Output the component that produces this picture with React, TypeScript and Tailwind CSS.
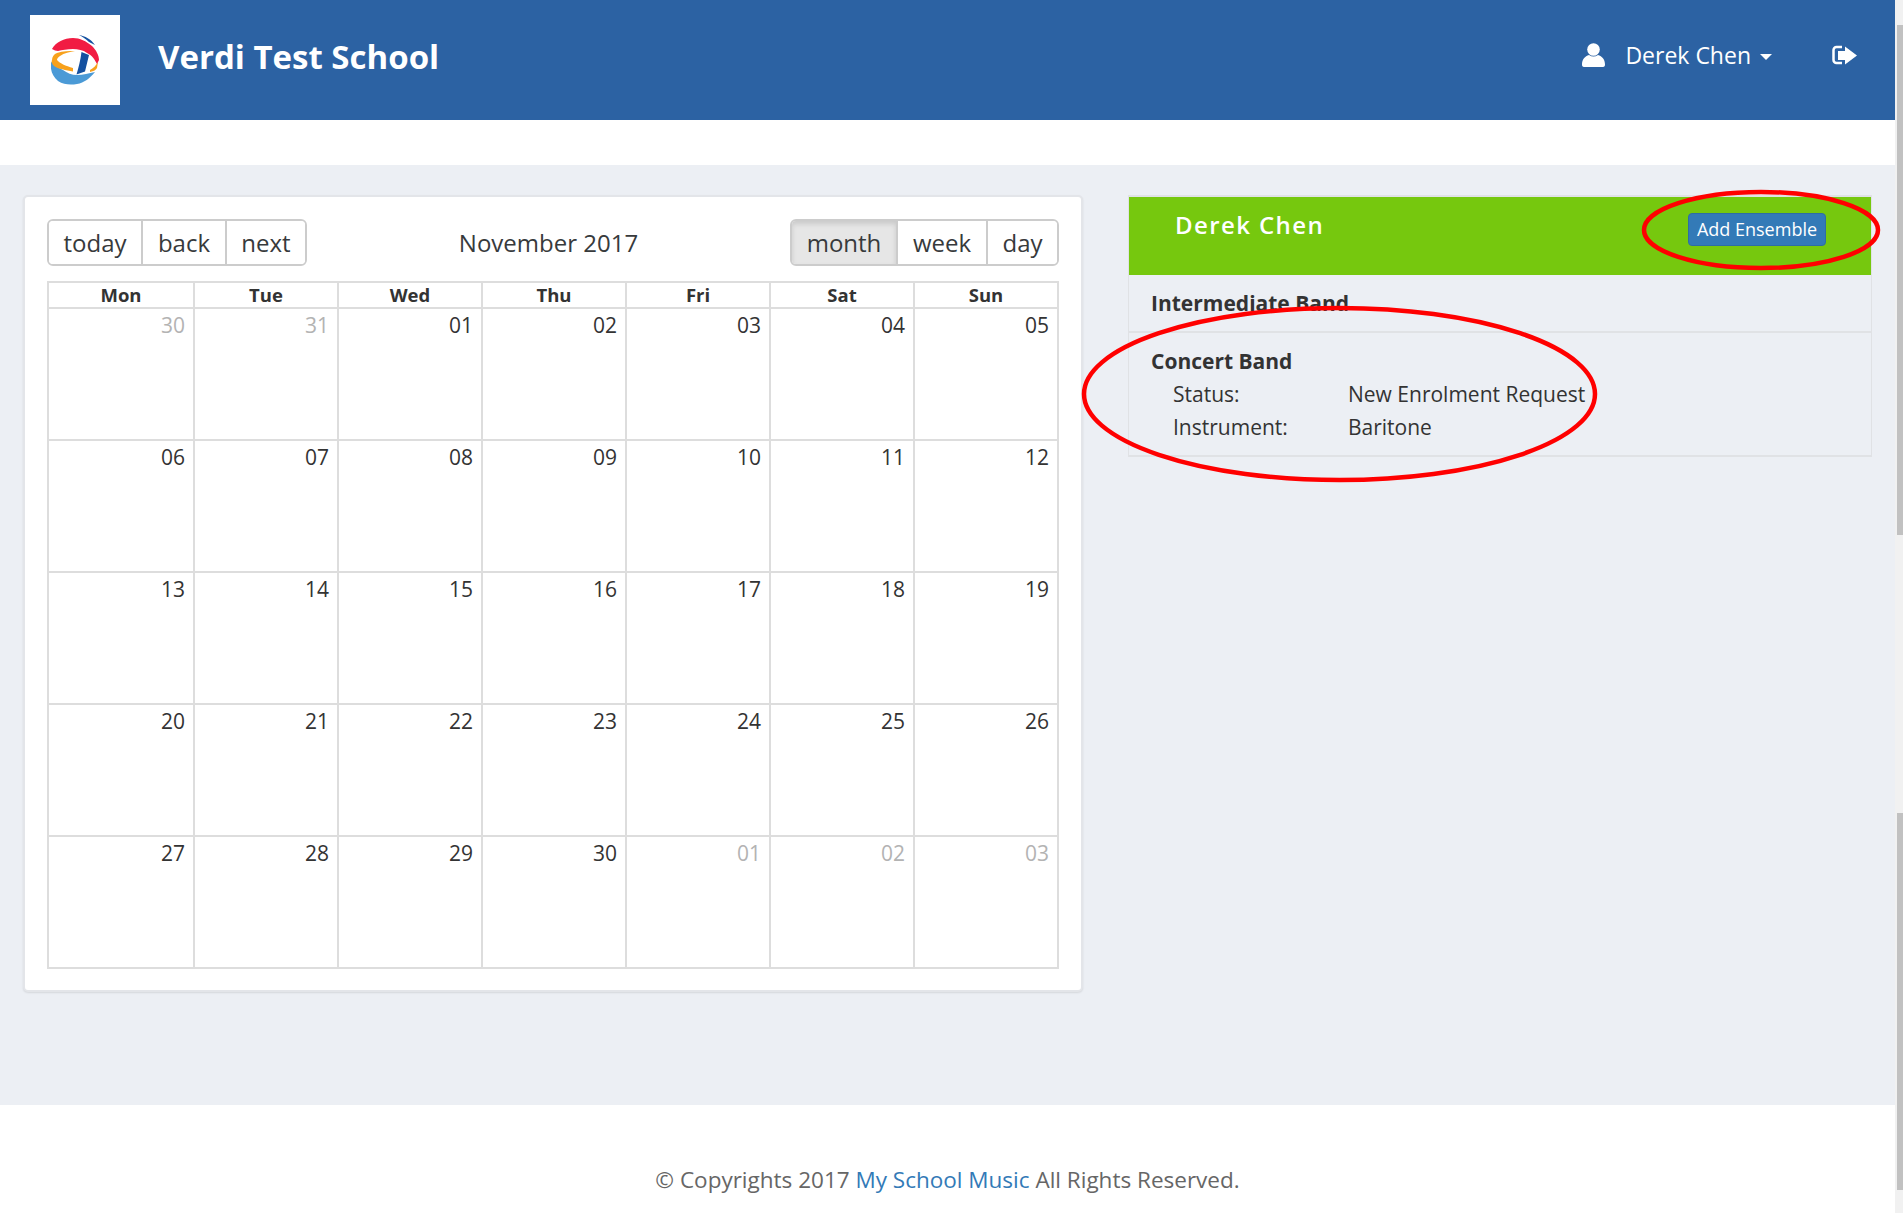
const font = { fontFamily: '"Open Sans", sans-serif' }

const headers = ['Mon', 'Tue', 'Wed', 'Thu', 'Fri', 'Sat', 'Sun']

const weeks = [
  ['30', '31', '01', '02', '03', '04', '05'],
  ['06', '07', '08', '09', '10', '11', '12'],
  ['13', '14', '15', '16', '17', '18', '19'],
  ['20', '21', '22', '23', '24', '25', '26'],
  ['27', '28', '29', '30', '01', '02', '03'],
]

function isOffRange(week: number, day: number) {
  return (week === 0 && day < 2) || (week === 4 && day > 3)
}

function Logo() {
  return (
    <svg width="49" height="50" viewBox="0 0 49 50">
      <path d="M0 27C-1 34 1 41 7 46c6 4 13 4 19 3 7-1 13-6 18-12-6 1-12 3-18 3-5 0-10-2-14-5C8 33 4 31 2 28Z" fill="#4b9ad6" />
      <path d="M1 25c0-3 2-6 5-7 6-2 12-2 18-2-5 1-11 2-15 5-2 1-3 3-3 4 2 3 9 6 16 8v3.500C15 35 7 34 3 31 1 29 0 27 1 25Z" fill="#f7a11c" />
      <path d="M39 35c4-2 6-5 8-8l-1 6c-1 2-3 3-7 4Z" fill="#f7a11c" />
      <path d="M30.500 17l7.500 3L34 36.500 25.500 39.500c2-7 4-14 5-22.500Z" fill="#1450a0" />
      <path d="M28 0c6 1 12 4 16 10l-6-3c-3-3-6-5-10-7Z" fill="#1450a0" />
      <path d="M1 14C5 7 13 3 22 3c7 0 13 3 19 8 4 4 7 9 7 14l-2 4c-2-4-5-9-10-11-4-3-9-4-14-4-6 0-11 1-15 2-2 0-4-1-6-2Z" fill="#f11c43" />
    </svg>
  )
}

function UserIcon() {
  return (
    <svg width="23" height="24" viewBox="0 0 23 24" fill="#fff">
      <circle cx="11.500" cy="6.500" r="6.300" />
      <path d="M2 24c-1.500 0-2-1-2-2.500 0-5 3-8.500 7-9.500 3 2 6 2 9 0 4 1 7 4.500 7 9.500 0 1.500-.5 2.500-2 2.500Z" />
    </svg>
  )
}

function LogOutIcon() {
  return (
    <svg width="25" height="20" viewBox="0 0 25 20" className="ml-[60px]" fill="#fff">
      <path d="M10 2H4.500A3 3 0 0 0 1.500 5v10a3 3 0 0 0 3 3H10" fill="none" stroke="#fff" strokeWidth="2.500" />
      <path d="M6 6h7V1.500L25 10.500 13 19.500V15H6Z" />
    </svg>
  )
}

function ToolbarButton({ label, active, className }: { label: string; active?: boolean; className: string }) {
  return (
    <div
      className={`flex h-full items-center justify-center border-[#ccc] ${className} ${
        active ? 'bg-[#e6e6e6] shadow-[inset_0_3px_5px_rgba(0,0,0,0.125)]' : 'bg-white'
      }`}
    >
      {label}
    </div>
  )
}

function Calendar() {
  return (
    <div className="h-[797px] w-[1060px] rounded-[5px] border-2 border-[#e3e5e9] bg-white px-[22px] pt-[22px] shadow-[0_1px_2px_rgba(0,0,0,0.1)]">
      <div className="flex h-[47px] items-center justify-between text-[24px] text-[#373a3c]">
        <div className="flex h-full overflow-hidden rounded-[6px] border-2 border-[#ccc]">
          <ToolbarButton label="today" className="w-[92px]" />
          <ToolbarButton label="back" className="w-[84px] border-l-2" />
          <ToolbarButton label="next" className="w-[80px] border-l-2" />
        </div>
        <div className="text-[24px]">November 2017</div>
        <div className="flex h-full overflow-hidden rounded-[6px] border-2 border-[#ccc]">
          <ToolbarButton label="month" active className="w-[106px] border-r-2 border-r-[#ccc]" />
          <ToolbarButton label="week" className="w-[88px]" />
          <ToolbarButton label="day" className="w-[71px] border-l-2" />
        </div>
      </div>
      <div className="mt-[15px] w-[1012px] border-2 border-[#ddd]">
        <div className="grid h-[26px] grid-cols-7 border-b-2 border-[#ddd]">
          {headers.map((h, i) => (
            <div
              key={h}
              className={`text-center text-[18.500px] leading-[24px] font-bold text-[#333] ${i > 0 ? 'border-l-2 border-[#ddd]' : ''}`}
            >
              {h}
            </div>
          ))}
        </div>
        {weeks.map((week, w) => (
          <div key={w} className={`grid grid-cols-7 ${w < 4 ? 'h-[132px] border-b-2 border-[#ddd]' : 'h-[130px]'}`}>
            {week.map((d, i) => (
              <div
                key={i}
                className={`pt-[3px] pr-[8px] text-right text-[21px] leading-[27px] ${i > 0 ? 'border-l-2 border-[#ddd]' : ''} ${
                  isOffRange(w, i) ? 'text-[#b3b3b3]' : 'text-[#333]'
                }`}
              >
                {d}
              </div>
            ))}
          </div>
        ))}
      </div>
    </div>
  )
}

function EnsemblePanel() {
  return (
    <div className="w-[744px] self-start border-x border-y-2 border-[#e0e2e5] text-[21px] text-[#333]">
      <div className="flex h-[78px] items-start justify-between bg-[#76c80e] pt-[11px] pr-[45px] pl-[46px]">
        <div className="text-[24px] leading-[33px] font-semibold tracking-[1.400px] text-white">Derek Chen</div>
        <button className="mt-[5px] h-[33px] w-[138px] rounded-[4px] border border-[#2e6da4] bg-[#337ab7] text-[18px] text-white">
          Add Ensemble
        </button>
      </div>
      <div className="border-b-2 border-[#e0e2e5] pt-[15px] pb-[14px] pl-[22px] leading-[27px] font-bold">
        Intermediate Band
      </div>
      <div className="pt-[15px] pb-[14px] pl-[22px] leading-[27px]">
        <div className="font-bold">Concert Band</div>
        <div className="mt-[6px] flex pl-[22px]">
          <div className="w-[175px]">Status:</div>
          <div>New Enrolment Request</div>
        </div>
        <div className="mt-[6px] flex pl-[22px]">
          <div className="w-[175px]">Instrument:</div>
          <div>Baritone</div>
        </div>
      </div>
    </div>
  )
}

function Scrollbar() {
  return (
    <div className="absolute top-0 right-0 h-[1213px] w-[8px] bg-[#f1f1f1]">
      <div className="absolute top-[25px] right-0 h-[510px] w-[6px] bg-[#c1c1c1]" />
      <div className="absolute top-[813px] right-0 h-[377px] w-[6px] bg-[#c1c1c1]" />
    </div>
  )
}

export default function App() {
  return (
    <div className="relative h-[1213px] w-[1903px] overflow-hidden bg-white pr-[8px]" style={font}>
      <header className="flex h-[120px] items-start bg-[#2c62a3] text-white">
        <div className="mt-[15px] ml-[30px] flex h-[90px] w-[90px] items-center justify-center bg-white">
          <Logo />
        </div>
        <h1 className="mt-[34px] ml-[38px] text-[33px] leading-[46px] font-bold">Verdi Test School</h1>
        <div className="mt-[41px] ml-auto flex items-center pr-[38px]">
          <UserIcon />
          <span className="ml-[20px] text-[23px] leading-[28px] font-medium">Derek Chen</span>
          <span className="mt-[4px] ml-[9px] h-0 w-0 border-x-[6px] border-t-[6px] border-x-transparent border-t-white" />
          <LogOutIcon />
        </div>
      </header>
      <main className="mt-[45px] flex h-[940px] gap-[45px] bg-[#eceff4] pt-[30px] pl-[23px]">
        <Calendar />
        <EnsemblePanel />
      </main>
      <footer className="pt-[60px] text-center text-[22.500px] leading-[30px] text-[#666]">
        © Copyrights 2017 <span className="text-[#337ab7]">My School Music</span> All Rights Reserved.
      </footer>
      <svg className="pointer-events-none absolute top-0 left-0" width="1903" height="1213" fill="none" stroke="#f00" strokeWidth="4.500">
        <ellipse cx="1761" cy="230" rx="117" ry="38" />
        <ellipse cx="1339.500" cy="394" rx="255.500" ry="86" />
      </svg>
      <Scrollbar />
    </div>
  )
}
